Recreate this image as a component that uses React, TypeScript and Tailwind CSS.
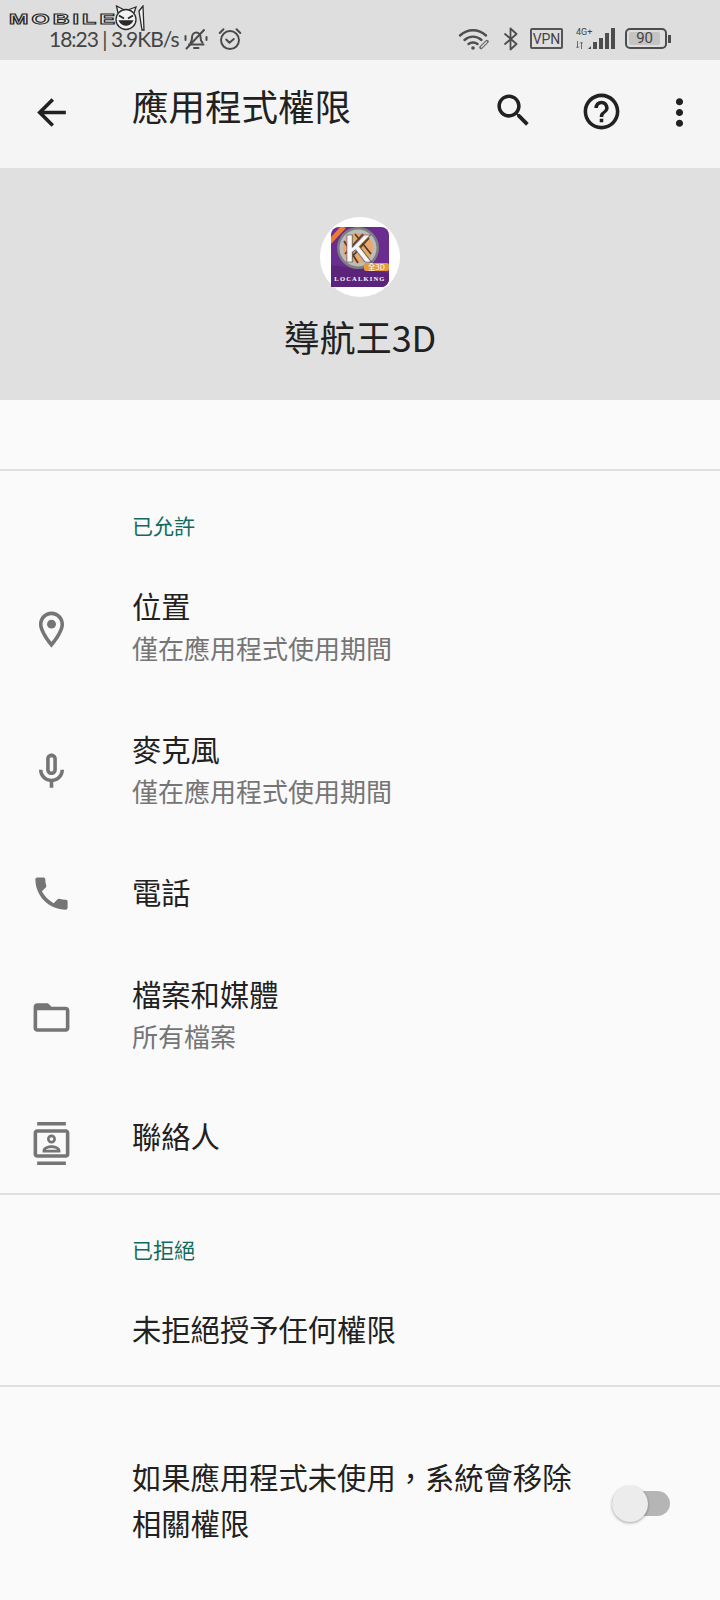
import type { ReactNode } from 'react';

const CJK = "font-['Noto_Sans_CJK_TC','Noto_Sans',sans-serif]";

// --- ICONS ---
function Icon({ d, size = 43, children }: { d?: string; size?: number; children?: ReactNode }) {
  return (
    <svg width={size} height={size} viewBox="0 0 24 24" fill="#757575">
      {d && <path d={d} />}
      {children}
    </svg>
  );
}

const PIN = 'M12 2C8.13 2 5 5.13 5 9c0 5.25 7 13 7 13s7-7.75 7-13c0-3.87-3.13-7-7-7zM7 9c0-2.76 2.24-5 5-5s5 2.24 5 5c0 2.88-2.88 7.19-5 9.88C9.92 16.21 7 11.85 7 9z';
const MIC = 'M12 14c1.66 0 3-1.34 3-3V5c0-1.66-1.34-3-3-3S9 3.34 9 5v6c0 1.66 1.34 3 3 3zm-1-9c0-.55.45-1 1-1s1 .45 1 1v6c0 .55-.45 1-1 1s-1-.45-1-1V5zm6 6c0 2.76-2.24 5-5 5s-5-2.24-5-5H5c0 3.53 2.61 6.43 6 6.92V21h2v-3.08c3.39-.49 6-3.39 6-6.92h-2z';
const PHONE = 'M6.62 10.79c1.44 2.83 3.76 5.14 6.59 6.59l2.2-2.2c.27-.27.67-.36 1.02-.24 1.12.37 2.33.57 3.57.57.55 0 1 .45 1 1V20c0 .55-.45 1-1 1-9.39 0-17-7.61-17-17 0-.55.45-1 1-1h3.5c.55 0 1 .45 1 1 0 1.25.2 2.45.57 3.57.11.35.03.74-.25 1.02l-2.2 2.2z';
const FOLDER = 'M20 6h-8l-2-2H4c-1.1 0-1.99.9-1.99 2L2 18c0 1.1.9 2 2 2h16c1.1 0 2-.9 2-2V8c0-1.1-.9-2-2-2zm0 12H4V8h16v10z';
const CONTACTS = 'M20 0H4v2h16V0zM4 24h16v-2H4v2zM20 4H4c-1.1 0-2 .9-2 2v12c0 1.1.9 2 2 2h16c1.1 0 2-.9 2-2V6c0-1.1-.9-2-2-2zm0 14H4V6h16v12zm-8-6c1.38 0 2.5-1.12 2.5-2.5S13.38 7 12 7s-2.5 1.12-2.5 2.5S10.62 12 12 12zm0-3.5c.55 0 1 .45 1 1s-.45 1-1 1-1-.45-1-1 .45-1 1-1zm5 7.49C17 13.9 13.69 13 12 13s-5 .9-5 2.99V17h10v-1.01zm-8.19-.49c.61-.52 2.03-1 3.19-1 1.17 0 2.59.48 3.2 1H8.81z';

function MuteBell() {
  return (
    <svg width="24" height="24" viewBox="0 0 24 24" fill="none" stroke="#4a4a4a" strokeWidth="2" strokeLinecap="round">
      <path d="M6.500 16c1.300-1.500 1.500-3 1.500-5.500 0-2.700 1.800-5 4.300-5 2.400 0 4.200 2 4.200 4.500 0 3 .5 4.500 2 5.800" />
      <path d="M5 17.500h14.500M10 21h4.500" />
      <path d="M2.500 21.500L20 3" />
      <path d="M1.500 9v4M22.500 10v3" />
    </svg>
  );
}

function AlarmClock() {
  return (
    <svg width="26" height="26" viewBox="0 0 24 24" fill="none" stroke="#4a4a4a" strokeWidth="1.800" strokeLinecap="round" strokeLinejoin="round">
      <circle cx="12" cy="13" r="8.300" />
      <path d="M8.500 12.500l3 3 4-3.500" />
      <path d="M2.500 6.500L6 3M21.500 6.500L18 3" />
    </svg>
  );
}

function WifiLink() {
  return (
    <svg width="33" height="24" viewBox="0 0 33 24" fill="none" stroke="#4d4d4d" strokeWidth="2.400" strokeLinecap="round">
      <path d="M2 8.500C9.500 1.500 20.500 1.500 28 8.500" />
      <path d="M6.500 13C11.500 8.500 18.500 8.500 23.500 13" />
      <path d="M10.500 17C13 15 17 15 19.500 17" />
      <circle cx="15" cy="21" r="1.800" fill="#4d4d4d" stroke="none" />
      <path d="M23 20.500l6-6" stroke="#6a6a6a" strokeWidth="3.500" />
      <path d="M23.500 20l5-5" stroke="#dedede" strokeWidth="1.200" />
    </svg>
  );
}

function Bluetooth() {
  return (
    <svg width="16" height="24" viewBox="0 0 16 24" fill="none" stroke="#4d4d4d" strokeWidth="1.800" strokeLinejoin="round">
      <path d="M1.500 6.500L13.500 17 7.500 22.500V1.500L13.500 7 1.500 17.500" />
    </svg>
  );
}

function Signal() {
  return (
    <svg width="27" height="21" viewBox="0 0 27 21" fill="#4d4d4d">
      <path d="M0 21h3v-3l-3 3z" />
      <rect x="5" y="14" width="4" height="7" />
      <rect x="11" y="10" width="4" height="11" />
      <rect x="17" y="5" width="4" height="16" />
      <rect x="23" y="0" width="4" height="21" />
    </svg>
  );
}

function DataArrows() {
  return (
    <svg width="7" height="8" viewBox="0 0 7 8" fill="none" stroke="#6a6a6a" strokeWidth="1">
      <path d="M1.500 0v7M0 5.500L1.500 7 3 5.500M5.500 8V1M4 2.500L5.500 1 7 2.500" />
    </svg>
  );
}

function BackArrow() {
  return (
    <svg width="43" height="43" viewBox="0 0 24 24" fill="#212121">
      <path d="M20 11H7.830l5.590-5.590L12 4l-8 8 8 8 1.410-1.410L7.830 13H20v-2z" />
    </svg>
  );
}

function SearchGlyph() {
  return (
    <svg width="43" height="43" viewBox="0 0 24 24" fill="#212121">
      <path d="M15.500 14h-.790l-.280-.270C15.410 12.590 16 11.110 16 9.500 16 5.910 13.090 3 9.500 3S3 5.910 3 9.500 5.910 16 9.500 16c1.610 0 3.090-.590 4.230-1.570l.270.280v.790l5 4.990L20.490 19l-4.990-5zm-6 0C7.010 14 5 11.990 5 9.500S7.010 5 9.500 5 14 7.010 14 9.500 11.990 14 9.500 14z" />
    </svg>
  );
}

function HelpGlyph() {
  return (
    <svg width="43" height="43" viewBox="0 0 24 24" fill="#212121">
      <path d="M11 18h2v-2h-2v2zm1-16C6.480 2 2 6.480 2 12s4.480 10 10 10 10-4.480 10-10S17.520 2 12 2zm0 18c-4.410 0-8-3.590-8-8s3.590-8 8-8 8 3.590 8 8-3.590 8-8 8zm0-14c-2.210 0-4 1.790-4 4h2c0-1.100.9-2 2-2s2 .9 2 2c0 2-3 1.750-3 5h2c0-2.250 3-2.500 3-5 0-2.210-1.790-4-4-4z" />
    </svg>
  );
}

function MoreGlyph() {
  return (
    <svg width="43" height="43" viewBox="0 0 24 24" fill="#212121">
      <path d="M12 8c1.100 0 2-.9 2-2s-.9-2-2-2-2 .9-2 2 .9 2 2 2zm0 2c-1.100 0-2 .9-2 2s.9 2 2 2 2-.9 2-2-.9-2-2-2zm0 6c-1.100 0-2 .9-2 2s.9 2 2 2 2-.9 2-2-.9-2-2-2z" />
    </svg>
  );
}

function CatLogo() {
  return (
    <svg width="32" height="26" viewBox="0 0 32 26" fill="none" stroke="#2a2a2a" strokeWidth="1.300">
      <path d="M3 8L1.500 1l7 3.500M19 8l2-6-7 2.500" fill="#f2f2f2" />
      <circle cx="11" cy="14.500" r="10" fill="#f2f2f2" />
      <path d="M4 10.500l5 3M18 10.500l-5 3" strokeWidth="2" />
      <path d="M4.500 16c3 5.500 10 5.500 13 0z" fill="#2a2a2a" />
      <path d="M24 6l4-5 1 24h-2z" fill="#f2f2f2" />
    </svg>
  );
}

function AppIcon() {
  return (
    <svg width="58" height="60" viewBox="0 0 58 60">
      <rect x="0" y="0" width="58" height="60" rx="8" fill="#6a2c8e" />
      <path d="M0 60V38l58 8v6a8 8 0 0 1-8 8z" fill="#5b2379" />
      <circle cx="27" cy="21" r="21" fill="#7e7e7e" />
      <circle cx="27" cy="21" r="18.500" fill="#bcbcbc" />
      <circle cx="27" cy="21" r="15" fill="#e9a867" />
      <path d="M14 27L32 7M18 33L38 11M13 14l14 22M24 7l16 20" stroke="#4f4036" strokeWidth="1.800" />
      <text x="27" y="35" textAnchor="middle" fontSize="38" fontWeight="700" fill="#f7f7f7" stroke="#333333" strokeWidth="0.600" fontFamily="Liberation Sans">K</text>
      <path d="M-1 11L10-1l5 2L0 17z" fill="#ee7d2b" />
      <rect x="33" y="36" width="25" height="8" rx="2" fill="#e59a3c" />
      <text x="45.500" y="43" textAnchor="middle" fontSize="7.500" fill="#ffffff" fontFamily="Noto Sans CJK TC">全3D</text>
      <text x="29" y="53.500" textAnchor="middle" fontSize="6.500" letterSpacing="1.200" fontWeight="700" fill="#ffffff" fontFamily="Liberation Serif">LOCALKING</text>
    </svg>
  );
}

// --- PAGE PARTS ---
function StatusBar() {
  return (
    <header className="relative h-[60px] bg-[#dedede] flex items-center pl-[49px] pr-[49px] pt-[17px] text-[#444444]">
      <div className="absolute left-[9px] top-[10px] flex items-start">
        <span className="w-[106px] text-[15px] leading-[18px] font-bold font-['Liberation_Sans',sans-serif] tracking-[2px] text-[#f4f4f4] [-webkit-text-stroke:1px_#2a2a2a] origin-left scale-x-[1.55] inline-block">MOBILE</span>
        <div className="-mt-[5px]"><CatLogo /></div>
      </div>
      <span className="text-[21px] tracking-[-1px] font-['Lato','Roboto',sans-serif] leading-none whitespace-nowrap">18:23 | 3.9KB/s</span>
      <div className="ml-[5px]"><MuteBell /></div>
      <div className="ml-[9px]"><AlarmClock /></div>
      <div className="ml-auto flex items-center">
        <WifiLink />
        <div className="ml-[12px]"><Bluetooth /></div>
        <div className="ml-[11px] w-[33px] h-[21px] border-2 border-[#555555] rounded-[2px] flex items-center justify-center text-[14px] font-['Roboto',sans-serif] leading-none">VPN</div>
        <div className="ml-[13px] relative w-[39px] h-[21px] flex justify-end">
          <span className="absolute left-0 -top-[1px] text-[9px] leading-[10px] font-['Roboto',sans-serif]">4G+</span>
          <span className="absolute left-0 bottom-0"><DataArrows /></span>
          <Signal />
        </div>
        <div className="ml-[10px] w-[42px] h-[21px] border-2 border-[#4d4d4d] rounded-[5px] p-[2px]">
          <div className="h-full w-[92%] bg-[#c4c4c4] rounded-[2px] flex items-center justify-center text-[15px] leading-none font-['Roboto',sans-serif]">90</div>
        </div>
        <div className="w-[3px] h-[8px] bg-[#4d4d4d] ml-[1px]" />
      </div>
    </header>
  );
}

function Toolbar() {
  return (
    <div className="h-[108px] bg-[#f5f5f5] flex items-center pl-[30px] pr-[19px] pb-[3px]">
      <BackArrow />
      <h1 className={`ml-[59px] mb-[13px] text-[36.500px] leading-none text-[#212121] ${CJK}`}>應用程式權限</h1>
      <div className="ml-auto flex items-center">
        <div className="mb-[4px]"><SearchGlyph /></div>
        <div className="ml-[45px] mb-[2px]"><HelpGlyph /></div>
        <div className="ml-[35px]"><MoreGlyph /></div>
      </div>
    </div>
  );
}

function Row({ icon, title, sub, h, textClass = '', iconClass = '' }: { icon?: ReactNode; title: string; sub?: string; h: string; textClass?: string; iconClass?: string }) {
  return (
    <div className={`flex items-center ${h}`}>
      <div className={`w-[132px] flex justify-center pr-[30px] ${iconClass}`}>{icon}</div>
      <div className={`${CJK} ${textClass}`}>
        <p className="text-[29.300px] leading-[40px] text-[#212121]">{title}</p>
        {sub && <p className="text-[26px] leading-[46px] text-[#757575]">{sub}</p>}
      </div>
    </div>
  );
}

function SectionLabel({ children }: { children: ReactNode }) {
  return <p className={`pl-[132px] text-[21px] leading-[30px] text-[#0f6b5f] ${CJK}`}>{children}</p>;
}

export default function App() {
  return (
    <main className="w-[720px] h-[1600px] bg-[#fafafa] overflow-hidden">
      <StatusBar />
      <Toolbar />

      {/* app header */}
      <section className="h-[232px] bg-[#e0e0e0] flex flex-col items-center pt-[49px]">
        <div className="w-[80px] h-[80px] rounded-full bg-white flex items-center justify-center">
          <AppIcon />
        </div>
        <h2 className={`mt-[15px] text-[36px] leading-[48px] text-[#212121] ${CJK}`}>導航王3D</h2>
      </section>

      <div className="mt-[69px] h-[2px] bg-[#e0e0e0]" />

      <div className="pt-[39px]">
        <SectionLabel>已允許</SectionLabel>
      </div>
      <div className="mt-[16px]">
        <Row h="h-[143px]" iconClass="mt-[4px]" title="位置" sub="僅在應用程式使用期間" icon={<Icon d={PIN}><circle cx="12" cy="9" r="2.500" /></Icon>} />
        <Row h="h-[143px]" iconClass="mt-[2px]" title="麥克風" sub="僅在應用程式使用期間" icon={<Icon d={MIC} />} />
        <Row h="h-[102px]" textClass="pb-[5px]" title="電話" icon={<Icon d={PHONE} />} />
        <Row h="h-[143px]" iconClass="mt-[4px]" title="檔案和媒體" sub="所有檔案" icon={<Icon d={FOLDER} />} />
        <Row h="h-[106px]" iconClass="mt-[6px]" textClass="pb-[10px]" title="聯絡人" icon={<Icon d={CONTACTS} />} />
      </div>

      <div className="h-[2px] bg-[#e0e0e0]" />
      <div className="pt-[39px]">
        <SectionLabel>已拒絕</SectionLabel>
      </div>
      <div className="mt-[7px]">
        <Row h="h-[114px]" title="未拒絕授予任何權限" />
      </div>
      <div className="h-[2px] bg-[#e0e0e0]" />

      {/* auto-revoke toggle */}
      <div className="mt-[66px] flex items-center pl-[132px] pr-[50px]">
        <p className={`flex-1 text-[29.300px] leading-[46px] text-[#212121] ${CJK}`}>如果應用程式未使用{'\uFF0C'}系統會移除<br />相關權限</p>
        <div className="relative mt-[8px] w-[58px] h-[25px] rounded-full bg-[#b5b5b5]">
          <div className="absolute left-0 -top-[5px] w-[36px] h-[36px] rounded-full bg-[#ececec] shadow-[0_1px_3px_rgba(0,0,0,0.35)]" />
        </div>
      </div>
    </main>
  );
}
